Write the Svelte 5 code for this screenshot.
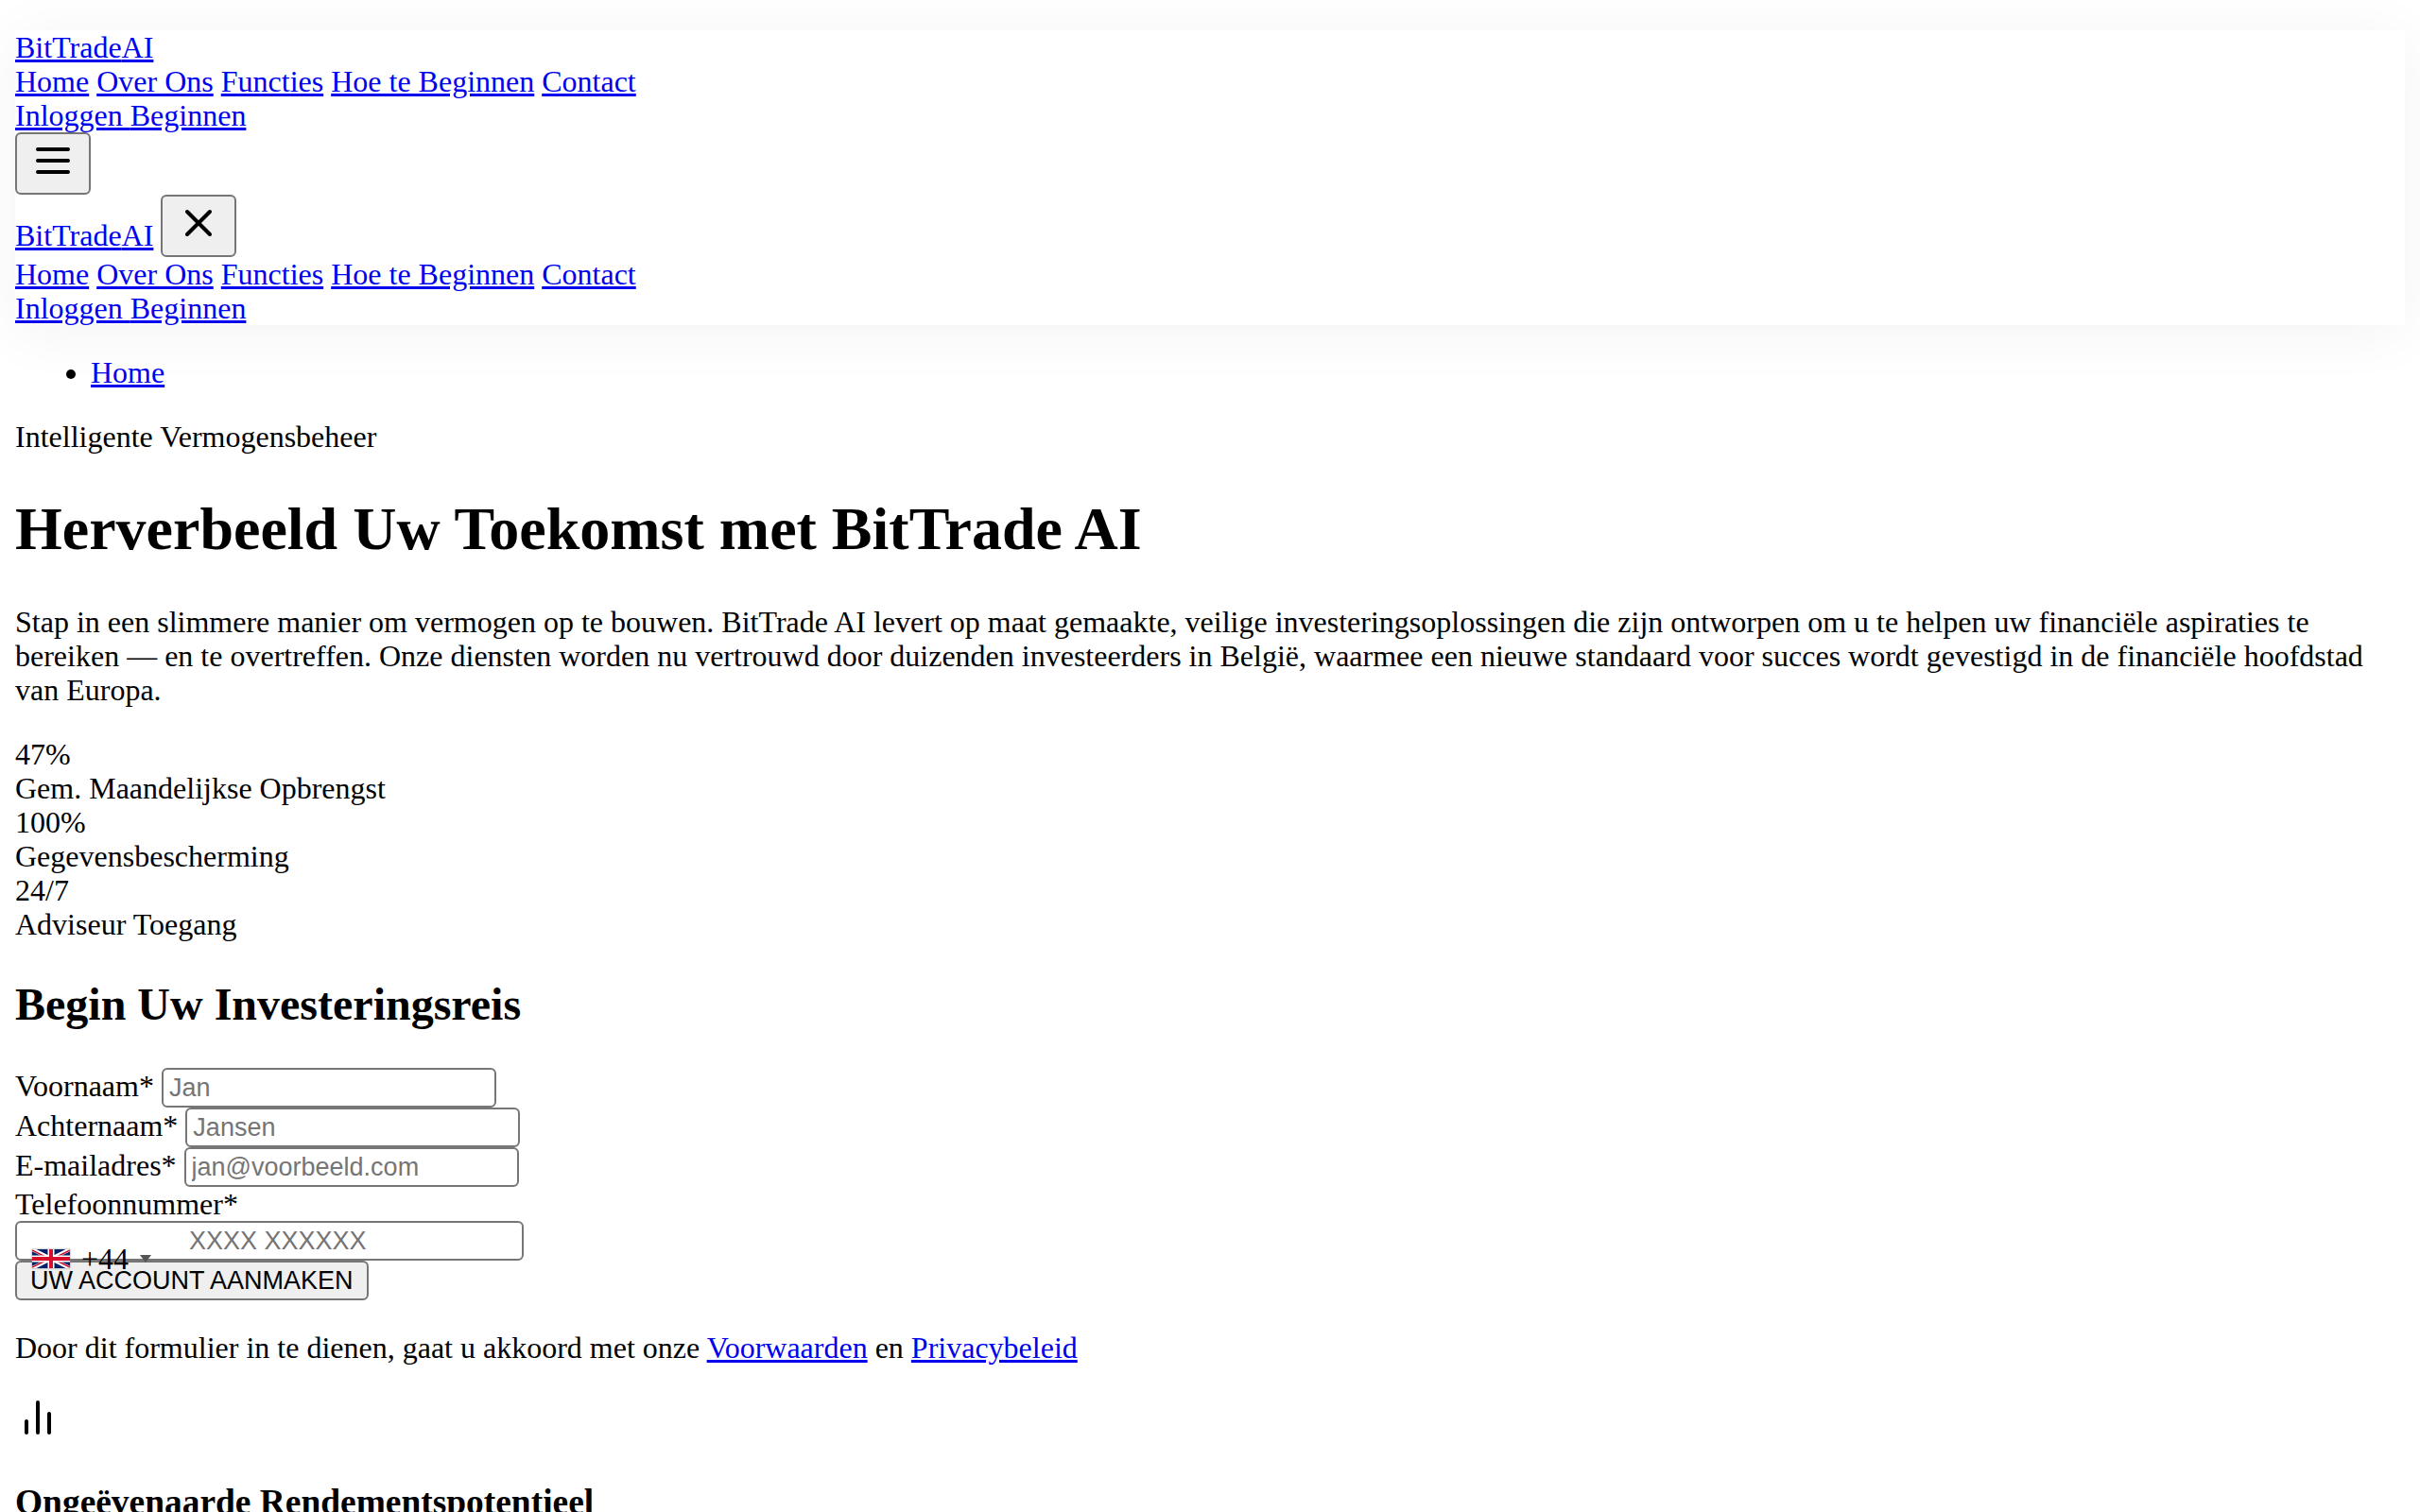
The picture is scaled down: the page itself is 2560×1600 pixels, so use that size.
<script lang="ts">
	interface NavLink {
		label: string;
		href: string;
	}

	const navLinks: NavLink[] = [
		{ label: 'Home', href: '#home' },
		{ label: 'Over Ons', href: '#over-ons' },
		{ label: 'Functies', href: '#functies' },
		{ label: 'Hoe te Beginnen', href: '#beginnen' },
		{ label: 'Contact', href: '#contact' }
	];

	const stats = [
		{ value: '47%', label: 'Gem. Maandelijkse Opbrengst' },
		{ value: '100%', label: 'Gegevensbescherming' },
		{ value: '24/7', label: 'Adviseur Toegang' }
	];

	const fields = [
		{ id: 'first-name', label: 'Voornaam*', type: 'text', placeholder: 'Jan' },
		{ id: 'last-name', label: 'Achternaam*', type: 'text', placeholder: 'Jansen' },
		{ id: 'email', label: 'E-mailadres*', type: 'email', placeholder: 'jan@voorbeeld.com' }
	];
</script>

{#snippet brand()}
	<a href="#home">BitTrade<span>AI</span></a>
{/snippet}

{#snippet links()}
	<nav>
		{#each navLinks as link}
			<a href={link.href}>{link.label}</a>{' '}
		{/each}
	</nav>
	<div>
		<a href="#inloggen">Inloggen{' '}</a><a href="#start">Beginnen</a>
	</div>
{/snippet}

<div class="page">
	<header>
		<div>{@render brand()}</div>
		{@render links()}
		<div>
			<button class="btn" type="button" aria-label="Menu openen">
				<svg class="icon" viewBox="0 0 24 24"><path d="M4 6h16M4 12h16M4 18h16" /></svg>
			</button>
		</div>
		<div>
			{@render brand()}
			<button class="btn" type="button" aria-label="Menu sluiten">
				<svg class="icon" viewBox="0 0 24 24"><path d="M6 18L18 6M6 6l12 12" /></svg>
			</button>
		</div>
		{@render links()}
	</header>

	<ul>
		<li><a href="#home">Home</a></li>
	</ul>

	<main>
		<p>Intelligente Vermogensbeheer</p>
		<h1>Herverbeeld Uw Toekomst met BitTrade AI</h1>
		<p>
			Stap in een slimmere manier om vermogen op te bouwen. BitTrade AI levert op maat gemaakte, veilige
			investeringsoplossingen die zijn ontworpen om u te helpen uw financiële aspiraties te bereiken — en te
			overtreffen. Onze diensten worden nu vertrouwd door duizenden investeerders in België, waarmee een nieuwe
			standaard voor succes wordt gevestigd in de financiële hoofdstad van Europa.
		</p>

		{#each stats as stat}
			<div>{stat.value}</div>
			<div>{stat.label}</div>
		{/each}

		<h2>Begin Uw Investeringsreis</h2>
		<form onsubmit={(e) => e.preventDefault()}>
			{#each fields as field}
				<div class="field">
					<label for={field.id}>{field.label}</label>
					<input class="input" id={field.id} type={field.type} placeholder={field.placeholder} />
				</div>
			{/each}
			<div><label for="phone">Telefoonnummer*</label></div>
			<div class="phone">
				<input class="input input-phone" id="phone" type="tel" placeholder="XXXX XXXXXX" />
				<!-- Country picker, lies over the phone field -->
				<button class="country" type="button" aria-label="Landcode +44">
					<svg class="flag" viewBox="0 0 40 20">
						<path fill="#012169" d="M0 0h40v20H0z" />
						<path stroke="#fff" stroke-width="4" d="M0 0l40 20M40 0L0 20" />
						<path stroke="#c8102e" stroke-width="1.4" d="M0 1l18 9M22 10l18 9M40 1l-18 9M18 10L0 19" />
						<path stroke="#fff" stroke-width="7" d="M20 0v20M0 10h40" />
						<path stroke="#d80f2b" stroke-width="4" d="M20 0v20M0 10h40" />
					</svg>
					<span>+44</span>
					<span class="arrow"></span>
				</button>
			</div>
			<div class="field">
				<button class="btn submit" type="submit">UW ACCOUNT AANMAKEN</button>
			</div>
		</form>
		<p>
			Door dit formulier in te dienen, gaat u akkoord met onze
			<a href="#voorwaarden">Voorwaarden</a> en <a href="#privacy">Privacybeleid</a>
		</p>

		<section>
			<svg class="icon" viewBox="0 0 24 24"><path d="M6 20v-6M12 20V4M18 20V10" /></svg>
			<h3>Ongeëvenaarde Rendementspotentieel</h3>
		</section>
	</main>
</div>

<style>
	:global(body) {
		margin: 0;
		background: #fff;
	}
	.page {
		padding: 32px 16px;
		color: #000;
		font-family: 'Liberation Serif', 'Times New Roman', serif;
		font-size: 32px;
		line-height: 36px;
	}
	header {
		background: #fff;
		box-shadow: 0 8px 60px rgba(0, 0, 0, 0.05);
	}
	a {
		color: #0000ee;
		text-decoration: underline;
	}
	ul {
		margin: 32px 0;
		padding-left: 80px;
	}
	p {
		margin: 32px 0;
	}
	h1 {
		margin: 43px 0;
		font-size: 64px;
		line-height: 74px;
	}
	h2 {
		margin: 40px 0;
		font-size: 48px;
		line-height: 54px;
	}
	h3 {
		margin: 37px 0;
		line-height: 43px;
	}
	.btn {
		box-sizing: border-box;
		margin: 0;
		padding: 4px 14px;
		border: 2px solid #767676;
		border-radius: 6px;
		background: #efefef;
		color: #000;
		font-family: 'Liberation Sans', Arial, sans-serif;
		font-size: 27px;
		line-height: 30px;
	}
	.icon {
		width: 48px;
		height: 48px;
		fill: none;
		stroke: currentColor;
		stroke-width: 2;
		stroke-linecap: round;
		stroke-linejoin: round;
	}
	.field {
		height: 42px;
	}
	.input {
		box-sizing: border-box;
		width: 354px;
		height: 42px;
		margin: 0;
		padding: 4px 6px;
		border: 2px solid #767676;
		border-radius: 6px;
		background: #fff;
		font-family: 'Liberation Sans', Arial, sans-serif;
		font-size: 27px;
	}
	.input::placeholder {
		color: #757575;
	}
	.phone {
		position: relative;
		width: 538px;
		max-width: 100%;
	}
	.input-phone {
		display: block;
		width: 100%;
		padding-left: 182px;
	}
	.submit {
		display: block;
		height: 42px;
	}
	.country {
		position: absolute;
		top: 22px;
		left: 2px;
		display: flex;
		align-items: center;
		gap: 12px;
		padding: 0 16px;
		border: 0;
		background: transparent;
		color: #000;
		font: inherit;
	}
	.flag {
		width: 40px;
		height: 20px;
		fill: none;
		box-shadow: 0 0 2px #888;
	}
	.arrow {
		border-top: 8px solid #555;
		border-left: 6px solid transparent;
		border-right: 6px solid transparent;
	}
</style>
